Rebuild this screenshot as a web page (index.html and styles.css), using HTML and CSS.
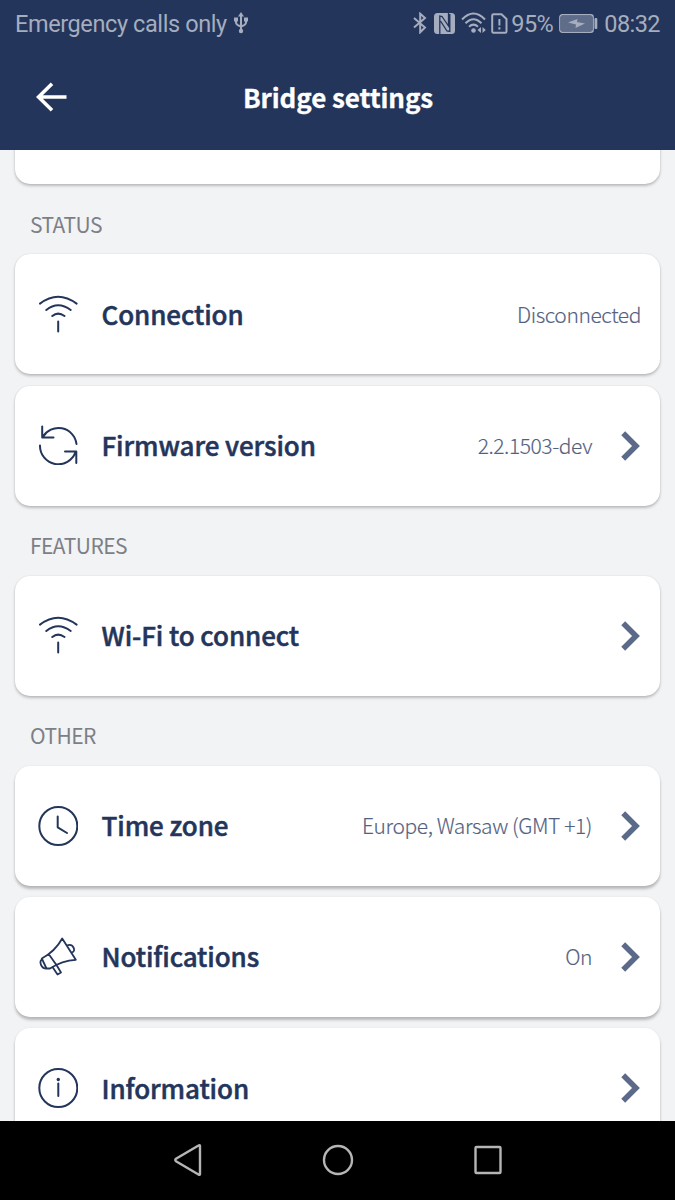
FILE: index.html
```html
<!DOCTYPE html>
<html lang="en">
<head>
<meta charset="utf-8">
<title>Bridge settings</title>
<link rel="stylesheet" href="styles.css">
</head>
<body>
<svg class="defs" width="0" height="0">
  <symbol id="wifi" viewBox="0 0 40 40"><path d="M2 9.600Q20-4.200 38.600 9.600M8.300 16Q20 6.400 32.700 16M14.300 22Q20 17.200 26.500 22M20.200 27.500V37.500"/></symbol>
  <symbol id="sync" viewBox="0 0 40 40"><path d="M4.200 1.500V12.500H15.500M4.600 12.200A18.200 18.200 0 0 1 38.500 19M2 20.500A18.300 18.300 0 0 0 37.500 27.200M27 26.500H38.300V38"/></symbol>
  <symbol id="chev" viewBox="0 0 20 30"><path d="M2.200 2.200 15 15 2.200 27.800"/></symbol>
</svg>
<div class="phone">
  <header class="top">
    <div class="status">
      <span class="carrier">Emergency calls only</span>
      <svg class="usb" viewBox="0 0 14 22"><path d="M7 3V19M2 8V10.500Q2 13 7 14.500M12 8V10.500Q12 13 7 14.500"/><path class="solid" d="M7 0 10 4.500H4ZM0 5.500H4V9.500H0ZM10 5.500H14V9.500H10Z"/><circle class="solid" cx="7" cy="19" r="2.200"/></svg>
      <span class="spacer"></span>
      <svg class="bt" viewBox="0 0 14 22"><path d="M1 6 12 15.500 7.200 20.300V1.700L12 6 1 15.500"/></svg>
      <svg class="nfc" viewBox="0 0 21 21"><rect class="solid" width="21" height="21" rx="3.500"/><path class="cut" d="M5.800 21V3L8 3.500 14.500 13V0M6.500 8 13 18 15.800 18.500V1"/></svg>
      <svg class="signal" viewBox="0 0 26 22"><path d="M1 7.500Q12.500-4.500 24 7.500M4.500 11.300Q12.500 3 20.500 11.300M8 14.700Q12.500 10.500 17 14.700"/><circle class="solid" cx="12.500" cy="18.500" r="2.300"/><path class="solid" d="M16.500 18 20 15V21ZM24.800 18 21.500 15V21Z"/></svg>
      <svg class="sim" viewBox="0 0 17 21"><path d="M1.200 2.500Q1.200 1.200 2.500 1.200H10.500L15.500 6V18.500Q15.500 19.800 14.200 19.800H2.500Q1.200 19.800 1.200 18.500ZM8.400 6V12.500M8.400 14.300V16.500"/></svg>
      <span class="pct">95%</span>
      <svg class="batt" viewBox="0 0 39 19"><rect class="fill" x="2" y="2" width="31" height="15"/><rect class="frame" x=".8" y=".8" width="33.400" height="17.400" rx="2.500"/><rect class="solid" x="35.500" y="4" width="2.800" height="11" rx="1"/><path class="solid" d="M9 8.500 18.500 5 18 8 26 9.500 16.500 14 17 10.500Z"/></svg>
      <span class="time">08:32</span>
    </div>
    <div class="bar">
      <svg class="back" viewBox="0 0 32 30"><path d="M16 1.800 2.500 15 16 28.200M3 15H30.500"/></svg>
      <h1>Bridge settings</h1>
    </div>
  </header>
  <main>
    <div class="card first"></div>
    <h2>STATUS</h2>
    <div class="card"><svg class="icon"><use href="#wifi"/></svg><span class="name">Connection</span><span class="value">Disconnected</span></div>
    <div class="card"><svg class="icon up"><use href="#sync"/></svg><span class="name">Firmware version</span><span class="value">2.2.1503-dev</span><svg class="chev"><use href="#chev"/></svg></div>
    <h2>FEATURES</h2>
    <div class="card"><svg class="icon up"><use href="#wifi"/></svg><span class="name">Wi-Fi to connect</span><svg class="chev"><use href="#chev"/></svg></div>
    <h2>OTHER</h2>
    <div class="card low"><svg class="icon" viewBox="0 0 40 40"><circle cx="20.300" cy="20" r="19"/><path d="M19.700 10.500V21.300L29 27"/></svg><span class="name">Time zone</span><span class="value">Europe, Warsaw (GMT +1)</span><svg class="chev"><use href="#chev"/></svg></div>
    <div class="card low"><svg class="icon thin" viewBox="0 0 40 40"><path d="M24.200 1.500 37.800 22.800Q24 23.500 12 31.500L8.500 31.500 3.800 21.500Q17 14.500 24.200 1.500ZM10.800 17.300 18.800 28.500M4 22.500Q1.500 24 3 27.800T8.500 31.500M14.500 30 19.500 37.500 23 35.500 18.500 28M28.800 8.500Q33.500 6.500 35.500 10.500T33.500 15.500"/></svg><span class="name">Notifications</span><span class="value">On</span><svg class="chev"><use href="#chev"/></svg></div>
    <div class="card low"><svg class="icon" viewBox="0 0 40 40"><circle cx="20.300" cy="20" r="19"/><path class="stem" d="M20.300 15.500V28"/><circle class="dot" cx="20.300" cy="11.500" r="1.700"/></svg><span class="name">Information</span><svg class="chev"><use href="#chev"/></svg></div>
  </main>
  <footer>
    <svg viewBox="0 0 30 34"><path d="M27 3Q27 1.500 25.500 2.500L3 15.800Q1.500 17 3 18.200L25.500 31.500Q27 32.500 27 31Z"/></svg>
    <svg viewBox="0 0 34 34"><circle cx="17" cy="17" r="14"/></svg>
    <svg viewBox="0 0 30 34"><rect x="2.500" y="4" width="25" height="26" rx="1"/></svg>
  </footer>
</div>
</body>
</html>
```
FILE: styles.css
```css
* { box-sizing: border-box; }
body { margin: 0; }
.defs { display: block; }
.phone {
  width: 675px;
  height: 1200px;
  display: flex;
  flex-direction: column;
  overflow: hidden;
  background: #f2f3f5;
  color: #23355b;
  font-family: "Noto Sans CJK SC", "Noto Sans", sans-serif;
}
svg { flex: none; fill: none; stroke: currentColor; }
.top { height: 150px; flex: none; background: #23355b; }
.status {
  height: 46px;
  padding: 0 15px;
  display: flex;
  align-items: center;
  color: #a5adbe;
  font: 23.5px/46px Roboto, sans-serif;
  letter-spacing: -.4px;
  white-space: nowrap;
}
.carrier, .pct, .time { padding-top: 1px; }
.pct, .time { letter-spacing: -.55px; }
.status svg { stroke-width: 2; }
.status .solid { fill: currentColor; stroke: none; }
.status .cut { stroke: #23355b; stroke-width: 1.3; }
.status .fill { fill: #5f6d8a; stroke: none; }
.status .frame { stroke-width: 1.4; }
.spacer { flex: 1; }
.usb { width: 14px; height: 22px; margin-left: 7px; }
.bt { width: 14px; height: 22px; margin-right: 7px; }
.nfc { width: 21px; height: 21px; margin-right: 6px; }
.signal { width: 26px; height: 22px; margin-right: 4px; }
.sim { width: 17px; height: 21px; margin-right: 3px; }
.batt { width: 39px; height: 19px; margin: 0 6px 0 6px; }
.bar {
  height: 104px;
  display: grid;
  grid-template-columns: 100px 1fr 100px;
  align-items: center;
  color: #fff;
}
.back { width: 32px; height: 30px; margin: 0 0 2px 36px; stroke-width: 3.6; }
h1 {
  margin: 0 0 2px 1px;
  font-size: 26px;
  line-height: 40px;
  font-weight: 700;
  letter-spacing: -.1px;
  text-align: center;
  white-space: nowrap;
  -webkit-text-stroke: .3px currentColor;
}
main { height: 971px; flex: none; overflow: hidden; }
.card {
  height: 120px;
  margin: 0 15px 11.300px;
  padding: 0 19px 0 23px;
  display: flex;
  align-items: center;
  border-radius: 15px;
  background: #fff;
  box-shadow: 0 2px 3px rgba(0, 0, 0, .22), 0 0 2px rgba(0, 0, 0, .1);
}
.card.low { box-shadow: 0 3px 3px rgba(0, 0, 0, .24), 0 0 2px rgba(0, 0, 0, .08); }
.card.first { margin-top: -85.700px; }
h2 {
  height: 70px;
  margin: -11.300px 0 0 30px;
  padding-top: 4.500px;
  font-size: 21px;
  line-height: 70px;
  font-weight: 400;
  letter-spacing: -.55px;
  color: #7d7f87;
}
.icon { width: 40px; height: 40px; stroke-width: 2; stroke-linecap: round; stroke-linejoin: round; }
.icon.up { margin-bottom: 2px; }
.icon.thin { stroke-width: 1.8; }
.stem { stroke-width: 2; }
.dot { fill: currentColor; stroke: none; }
.name {
  flex: 1;
  margin-left: 23.500px;
  padding-bottom: 1px;
  font-size: 26px;
  line-height: 40px;
  font-weight: 500;
  letter-spacing: -.1px;
  white-space: nowrap;
  -webkit-text-stroke: .5px currentColor;
}
.value {
  padding-bottom: 1px;
  color: #53617f;
  font-size: 21px;
  line-height: 40px;
  font-weight: 300;
  letter-spacing: -.42px;
  white-space: nowrap;
  -webkit-text-stroke: .15px currentColor;
}
.chev { width: 20px; height: 30px; margin-left: 29px; color: #5b6a89; stroke-width: 5.500; }
footer {
  flex: 1;
  padding: 0 172.500px 1px;
  display: flex;
  align-items: center;
  justify-content: space-between;
  background: #000;
  color: #b5b5b5;
}
footer svg { height: 34px; width: 30px; stroke-width: 2.400; }
footer svg:nth-child(2) { width: 34px; }
```
